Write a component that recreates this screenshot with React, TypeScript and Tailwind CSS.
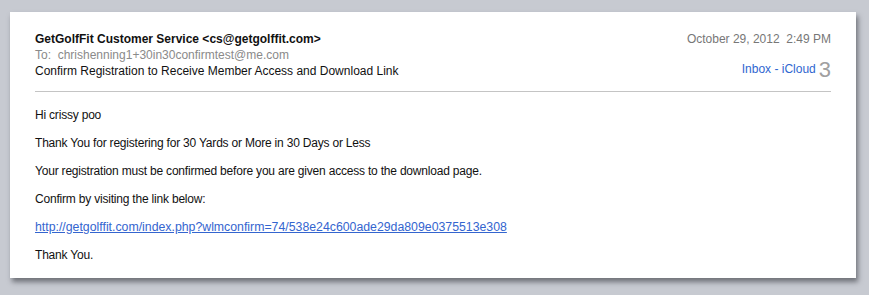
import React from 'react';

const paragraphs = [
  'Hi crissy poo',
  'Thank You for registering for 30 Yards or More in 30 Days or Less',
  'Your registration must be confirmed before you are given access to the download page.',
  'Confirm by visiting the link below:',
];

const link = 'http://getgolffit.com/index.php?wlmconfirm=74/538e24c600ade29da809e0375513e308';

export default function App() {
  return (
    <div
      className="w-[869px] h-[295px] bg-[#c7cad1] pt-[12px] pl-[10px] overflow-hidden"
      style={{ fontFamily: '"Liberation Sans", Arial, sans-serif' }}
    >
      <div className="w-[846px] h-[266px] bg-white shadow-[2px_4px_5px_rgba(40,42,50,0.55)] px-[25px] pt-[19px]">
        {/* message header */}
        <div className="flex justify-between">
          <div className="flex flex-col text-[12px] leading-[16px]">
            <span className="font-bold text-[#111]">GetGolfFit Customer Service &lt;cs@getgolffit.com&gt;</span>
            <span className="text-[#8a8a8a]">To:&nbsp; chrishenning1+30in30confirmtest@me.com</span>
            <span className="text-[#111]">Confirm Registration to Receive Member Access and Download Link</span>
          </div>
          <div className="flex flex-col items-end text-[12px] leading-[16px]">
            <span className="text-[#777]">October 29, 2012&nbsp; 2:49 PM</span>
            <div className="flex items-end mt-[14px] gap-[3px]">
              <span className="text-[#2f66d0] text-[12px] leading-[16px]">Inbox - iCloud</span>
              <span className="text-[#a0a0a0] text-[22px] leading-[18px] -mb-[2px]">3</span>
            </div>
          </div>
        </div>

        <div className="h-px bg-[#c4c4c4] mt-[12px]" />

        {/* message body */}
        <div className="flex flex-col gap-[12px] pt-[15px] text-[12px] tracking-[-0.2px] leading-[16px] text-[#111]">
          {paragraphs.map((p) => (
            <p key={p}>{p}</p>
          ))}
          <a href="#" className="text-[#3465cf] underline text-[12.3px] tracking-normal">{link}</a>
          <p>Thank You.</p>
        </div>
      </div>
    </div>
  );
}
